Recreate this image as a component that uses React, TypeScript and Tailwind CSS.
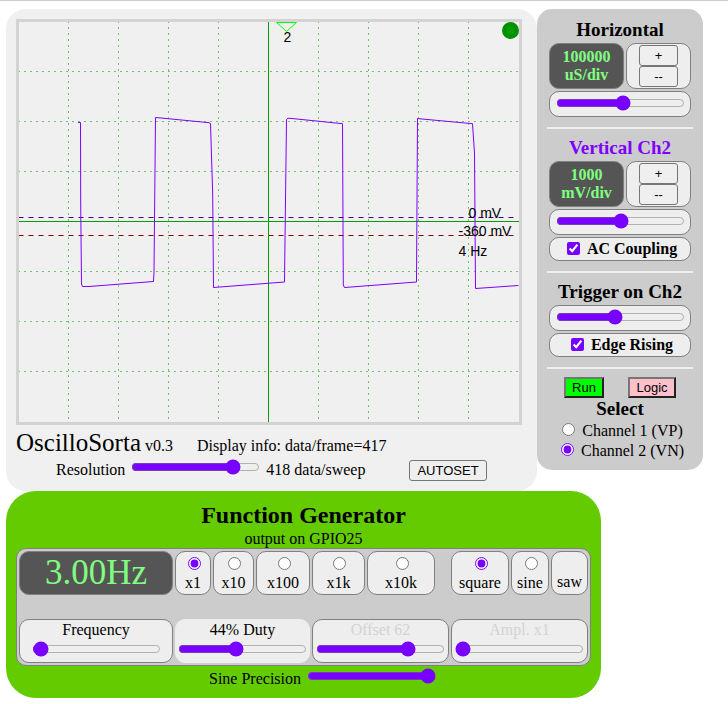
import { useState } from "react";
import type { ReactNode } from "react";

const minorColumns = [49.5, 99.5, 149.5, 199.5, 299.5, 349.5, 399.5, 449.5];
const minorRows = [49.5, 99.5, 149.5, 249.5, 299.5, 349.5];

const trace =
  "59,100.5 61.5,100.5 61.7,181 62.5,262 63.5,264.5 70,264.5 134.5,259.5 135,250 136.5,95.5 140,95.8 190,100.7 191.5,101.5 193.7,172 194.5,265.5 265.5,260 267.5,97.5 269,96.2 273,96.5 323.5,101.7 324.3,263 325.5,265.5 332,265 397.5,260 398.5,96.5 403,97 453.5,101.7 455.5,131 456.5,266.5 499.5,263.5";

function Scope() {
  return (
    <svg
      width="506"
      height="406"
      viewBox="0 0 500 400"
      role="img"
      aria-label="Oscilloscope display"
      className="block border-[3px] border-[#d3d3d3] font-['Liberation_Sans',Arial,sans-serif] text-sm"
    >
      <g stroke="#00a000" strokeOpacity="0.55" strokeDasharray="2 4" fill="none">
        {minorColumns.map((x) => (
          <path key={x} d={`M${x} -1V400`} />
        ))}
        {minorRows.map((y) => (
          <path key={y} d={`M-1 ${y}H500`} />
        ))}
      </g>
      <path d="M-0.5 195.5H495" stroke="#3c0090" strokeDasharray="5 5" />
      <path d="M-0.5 213.5H495" stroke="#800000" strokeDasharray="5 5" />
      <path d="M0 199.5H500M249.5 0V400" stroke="#00a000" />
      <polyline points={trace} fill="none" stroke="#7f00ff" />
      <path d="M257.500 0.500H277.500L267.500 9.500Z" fill="none" stroke="#00ff00" />
      <circle cx="491.500" cy="8.500" r="6" fill="#00a000" stroke="#009000" strokeWidth="5" />
      <text x="264.500" y="20">2</text>
      <text x="449.500" y="196">0 mV</text>
      <text x="439.500" y="214">-360 mV</text>
      <text x="439.500" y="234">4 Hz</text>
    </svg>
  );
}

function Slider({ label, value }: { label: string; value: number }) {
  const [current, setCurrent] = useState(value);
  return (
    <input
      type="range"
      aria-label={label}
      min={0}
      max={100}
      value={current}
      onChange={(e) => setCurrent(Number(e.target.value))}
      className="mx-auto mt-px block h-4 w-[129px] accent-[#7700ff]"
    />
  );
}

function Box({ children, className = "" }: { children: ReactNode; className?: string }) {
  return (
    <div className={`rounded-[10px] border border-[#808080] bg-[#eee] ${className}`}>{children}</div>
  );
}

function StepButton({ label, children }: { label: string; children: string }) {
  return (
    <button
      aria-label={label}
      className="h-[21px] w-[39px] rounded-[3px] border border-[#767676] bg-[#efefef] font-['Liberation_Sans',Arial,sans-serif] text-[13px] leading-4"
    >
      {children}
    </button>
  );
}

function ScaleRow({ value, unit, name }: { value: string; unit: string; name: string }) {
  return (
    <div className="mt-0.5 flex gap-0.5">
      <Box className="w-[75px] bg-[#555]! py-1 text-center font-bold leading-[18px] text-[#80ff80]">
        {value}
        <br />
        {unit}
      </Box>
      <Box className="flex flex-1 flex-col items-center pt-px">
        <StepButton label={`Increase ${name}`}>+</StepButton>
        <StepButton label={`Decrease ${name}`}>--</StepButton>
      </Box>
    </div>
  );
}

function CheckRow({ label }: { label: string }) {
  return (
    <Box className="mt-0.5 h-6">
      <label className="flex items-start justify-center gap-[7px] pl-1 font-bold leading-[22px]">
        <input type="checkbox" defaultChecked className="mt-1 size-[13px] accent-[#7700ff]" />
        {label}
      </label>
    </Box>
  );
}

function Option({ name, label, checked }: { name: string; label: string; checked?: boolean }) {
  return (
    <Box className="h-11">
      <label className="flex flex-col items-center pt-[5px] leading-[18px]">
        <input type="radio" name={name} defaultChecked={checked} className="mb-1 ml-0.5 size-[13px] accent-[#7700ff]" />
        {label}
      </label>
    </Box>
  );
}

function SidePanel() {
  return (
    <aside className="w-[166px] rounded-[15px] bg-[#ccc] px-2.5 pb-2 pt-2.5">
      <section className="border-b-2 border-[#eee] px-0.5 pb-2.5">
        <h2 className="text-center text-[19px] font-bold leading-[22px]">Horizontal</h2>
        <ScaleRow value="100000" unit="uS/div" name="time scale" />
        <Box className="mt-0.5 h-[26px] pt-0.5">
          <Slider label="Horizontal scale" value={53} />
        </Box>
      </section>
      <section className="border-b-2 border-[#eee] px-0.5 pb-2.5 pt-2">
        <h2 className="text-center text-[19px] font-bold leading-[22px] text-[#7f00ff]">Vertical Ch2</h2>
        <ScaleRow value="1000" unit="mV/div" name="voltage scale" />
        <Box className="mt-0.5 h-[26px] pt-0.5">
          <Slider label="Vertical scale" value={51} />
        </Box>
        <CheckRow label="AC Coupling" />
      </section>
      <section className="border-b-2 border-[#eee] px-0.5 pb-2.5 pt-2">
        <h2 className="text-center text-[19px] font-bold leading-[22px]">Trigger on Ch2</h2>
        <Box className="mt-0.5 h-[26px] pt-0.5">
          <Slider label="Trigger level" value={46} />
        </Box>
        <CheckRow label="Edge Rising" />
      </section>
      <div className="flex justify-center gap-6 pt-2 font-['Liberation_Sans',Arial,sans-serif] text-[13px] leading-4">
        <button className="h-[21px] w-10 border-2 border-t-[#767676] border-l-[#767676] border-r-[#222] border-b-[#222] bg-[#00ff00]">Run</button>
        <button className="h-[21px] w-12 border-2 border-t-[#767676] border-l-[#767676] border-r-[#222] border-b-[#222] bg-[#ffc0cb]">Logic</button>
      </div>
      <fieldset className="pb-px">
        <legend className="mb-px w-full text-center text-[19px] font-bold leading-[22px]">Select</legend>
        <label className="flex items-start justify-center gap-[7px] pl-[5px] leading-5">
          <input type="radio" name="channel" className="mt-0.5 size-[13px] accent-[#7700ff]" />
          Channel 1 (VP)
        </label>
        <label className="flex items-start justify-center gap-[7px] pl-[5px] leading-5">
          <input type="radio" name="channel" defaultChecked className="mt-0.5 size-[13px] accent-[#7700ff]" />
          Channel 2 (VN)
        </label>
      </fieldset>
    </aside>
  );
}

function Generator() {
  return (
    <section className="w-fit rounded-[30px] bg-[#64cb00] px-2.5 pb-[7px] pt-2.5">
      <h2 className="text-center text-2xl font-bold leading-[29px]">Function Generator</h2>
      <p className="text-center leading-[18px]">output on GPIO25</p>
      <div className="grid grid-cols-[154px_36px_41px_54px_53px_68px_12px_58px_38px_37px] gap-x-0.5 rounded-[10px] border border-[#808080] bg-[#ccc] p-0.5">
        <Box className="h-11 bg-[#555]! text-center text-[35px] leading-[42px] text-[#80ff80]">3.00Hz</Box>
        <Option name="multiplier" label="x1" checked />
        <Option name="multiplier" label="x10" />
        <Option name="multiplier" label="x100" />
        <Option name="multiplier" label="x1k" />
        <Option name="multiplier" label="x10k" />
        <span />
        <Option name="wave" label="square" checked />
        <Option name="wave" label="sine" />
        <Box className="h-11 pt-[21px] text-center leading-[18px]">saw</Box>
        <Box className="mt-6 h-11 text-center leading-5">
          Frequency
          <Slider label="Frequency" value={1} />
        </Box>
        <Box className="col-span-3 mt-6 h-11 border-[#eee]! text-center leading-5">
          44% Duty
          <Slider label="Duty" value={44} />
        </Box>
        <Box className="col-span-3 mt-6 h-11 text-center leading-5 text-[#d3d3d3]">
          Offset 62
          <Slider label="Offset" value={74} />
        </Box>
        <Box className="col-span-3 mt-6 h-11 text-center leading-5 text-[#d3d3d3]">
          Ampl. x1
          <Slider label="Amplitude" value={0} />
        </Box>
      </div>
      <div className="flex items-start justify-center gap-1.5 pl-[38px] pt-px leading-6">
        <span>Sine Precision</span>
        <div>
          <Slider label="Sine precision" value={100} />
        </div>
      </div>
    </section>
  );
}

export default function App() {
  return (
    <main className="border-t border-[#ccc] px-1.5 pt-2 font-['Liberation_Serif','Times_New_Roman',serif] text-base text-black">
      <div className="flex items-start">
        <section className="rounded-[20px] bg-[#f0f0f0] pb-2 pl-2.5 pr-[15px] pt-2.5">
          <Scope />
          <div className="flex items-baseline pt-[3px]">
            <h1 className="text-[25px] leading-[30px]">OscilloSorta</h1>
            <span className="ml-1">v0.3</span>
            <span className="ml-6">Display info: data/frame=417</span>
          </div>
          <div className="flex h-[25px] items-start pl-10 leading-6">
            <span>Resolution</span>
            <div className="pl-1.5">
              <Slider label="Resolution" value={83} />
            </div>
            <span className="ml-1.5">418 data/sweep</span>
            <button className="ml-11 mt-0.5 h-[21px] rounded-[3px] border border-[#767676] bg-[#efefef] px-[7px] font-['Liberation_Sans',Arial,sans-serif] text-[13px] leading-4">
              AUTOSET
            </button>
          </div>
        </section>
        <SidePanel />
      </div>
      <Generator />
    </main>
  );
}
